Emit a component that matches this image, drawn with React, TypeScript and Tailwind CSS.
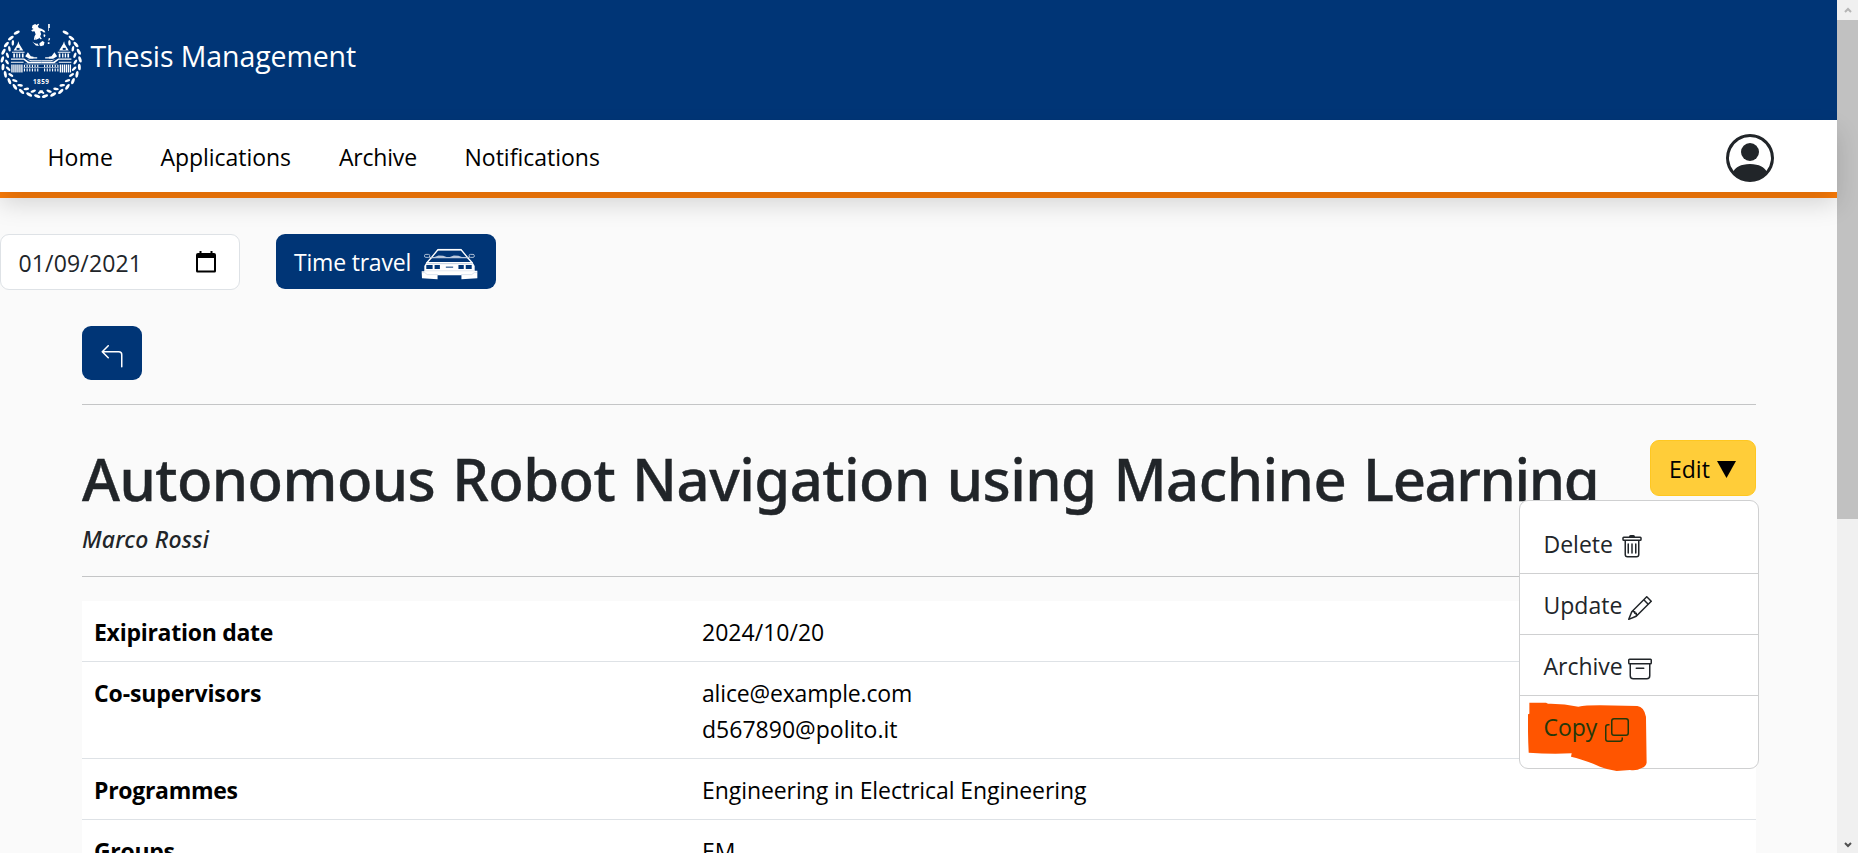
import type { ReactNode } from 'react';
import {
  BsArchive,
  BsArrow90DegLeft,
  BsCopy,
  BsPencil,
  BsPersonCircle,
  BsTrash,
} from 'react-icons/bs';

const LEAF_COUNT = 12;

function Wreath() {
  return (
    <>
      {Array.from({ length: LEAF_COUNT }, (_, i) => {
        const deg = -129 - i * 12.3;
        const t = (deg * Math.PI) / 180;
        const tilt = deg + 270;
        const ox = 124 + 117 * Math.cos(t);
        const oy = 150 + 108 * Math.sin(t);
        const ix = 124 + 103 * Math.cos(t - 0.08);
        const iy = 150 + 95 * Math.sin(t - 0.08);
        return (
          <g key={i}>
            <ellipse cx={ox} cy={oy} rx="10" ry="4.4" transform={`rotate(${tilt + 14} ${ox} ${oy})`} />
            {i > 0 && (
              <ellipse cx={ix} cy={iy} rx="8.5" ry="3.8" transform={`rotate(${tilt - 36} ${ix} ${iy})`} />
            )}
          </g>
        );
      })}
    </>
  );
}

function Crest() {
  const columns = [34, 40, 46, 52, 58, 64];
  const middle = [72, 80, 88, 96, 104, 112];
  return (
    <svg viewBox="0 35 250 230" className="h-[77px] w-[83px] shrink-0" fill="#fff">
      <Wreath />
      <g transform="translate(248 0) scale(-1 1)">
        <Wreath />
      </g>
      {/* statue */}
      <path d="M98 44l8-4 4 3 5-4 3 2-4 6 3 5 8 2 8 5 4 6-5 1-6-5-5 1 3 8-3 7 5 8-4 1-8-9-5 2-3 9-4-1 2-10 4-7-4-8-7 1-3-4 7-4-5-3z" />
      <path d="M104 60l12-2 4 14-3 12-10 4 2-14z" />
      <path d="M97 93q8 8 16 6l4 7-9-1zM119 98l9-7 6 4-2 9-9 3-4-3zM132 70l5 3-2 7-4-3z" />
      <path d="M145 40h5v12h-3v9h-2v-9zM146 84l5-2-1 6-4 3zM144 95h5v5h-5z" />
      {/* palace */}
      {[false, true].map((flip) => (
        <g key={String(flip)} transform={flip ? 'translate(248 0) scale(-1 1)' : undefined}>
          <path d="M55 92l3 8 12 20H41l12-20z" />
          <path d="M50 112h9v6h-9z" fill="#003576" />
          <path d="M36 124h38v3H36zM40 129h5v12h-5zM49 129h4v12h-4zM57 129h4v12h-4zM66 129h5v12h-5z" />
          <path d="M33 144h40l14 10h37v4H84l-13-10H33zM33 154h38v3H33z" />
          <path d="M76 137l8-12 9 12 8 2v6H88l-10-6zM98 140h14v4h-10zM80 146l14 6h30v-3H95z" />
          {columns.map((x) => (
            <rect key={x} x={x} y="162" width="4" height="24" />
          ))}
          {middle.map((x) => (
            <rect key={x} x={x} y="163" width="3.4" height="7" />
          ))}
          {middle.map((x) => (
            <rect key={`b${x}`} x={x} y="174" width="3.4" height="9" />
          ))}
          <path d="M74 160h50v1.5H74zM71 171h53v1.5H71z" />
        </g>
      ))}
      <text
        x="124"
        y="220"
        textAnchor="middle"
        fontFamily="Open Sans, sans-serif"
        fontSize="19"
        fontWeight="700"
        letterSpacing="1.5"
      >
        1859
      </text>
    </svg>
  );
}

function Car() {
  return (
    <svg viewBox="33 70 172 96" className="h-8 w-[57px] shrink-0" fill="none" stroke="#fff">
      <path d="M50 115l14-16 20-24h70l20 24 14 16" strokeWidth="4" />
      <path d="M84 74.5h70" strokeWidth="4" />
      <path d="M64 99h110" stroke="#b9c8dd" strokeWidth="3.5" />
      <path d="M74 97l12-5 14 1 10 4zM120 97l12-5 14 1 10 4z" fill="#b9c8dd" stroke="none" />
      <rect x="43.5" y="89" width="16" height="9" rx="4" stroke="#cdd8e7" strokeWidth="2.5" />
      <rect x="178" y="89" width="16" height="9" rx="4" stroke="#cdd8e7" strokeWidth="2.5" />
      <path d="M58 97l6 4M180 97l-6 4" strokeWidth="2.5" />
      <path d="M50 112h138l7 12v14h8v23l-48 3v-12H83v12l-47-3-1-21h8v-16z" fill="#fff" stroke="none" />
      <path d="M50 117h138" stroke="#7d97bb" strokeWidth="1.5" />
      <path d="M49 121h19v12H49zM74 121h16v12H74zM146 121h16v12h-16zM168 121h18v12h-18z" fill="#003576" stroke="none" />
      <path d="M108 127.5h22" stroke="#003576" strokeWidth="3" />
      <path d="M44 138.5h150" stroke="#c3cfe0" strokeWidth="1.5" />
      <path d="M36 144h8l8 6h32M202 144h-8l-8 6h-32" stroke="#b9c8dd" strokeWidth="1.5" />
    </svg>
  );
}

function Calendar() {
  return (
    <svg viewBox="0 0 20 22" className="h-[22px] w-5" fill="none">
      <path d="M3.5 0h2v2h9V0h2v2H18q2 0 2 2v16q0 1.500-1.500 1.500h-17Q0 21.500 0 20V4q0-2 2-2h1.500z" fill="#000" />
      <path d="M2 7h16v12.5H2z" fill="#fff" />
    </svg>
  );
}

function Marker() {
  return (
    <svg viewBox="84 306 357 208" className="absolute top-[6px] left-[8px] h-[69.3px] w-[119px]">
      <path
        d="M88 308H138L144 311Q190 310 235 320Q255 316 300 316L412 318Q432 320 438 350L440 488Q438 500 425 504Q410 513 390 510L350 513Q325 510 300 500Q250 478 213 470L215 460Q150 463 86 458Q83 400 84 343L88 341Z"
        fill="#ff5500"
      />
    </svg>
  );
}

function Row({ label, labelClass, children }: { label: string; labelClass: string; children: ReactNode }) {
  return (
    <div className="flex border-b border-[#dee2e6] bg-white px-3 pt-[13px] pb-[11px] leading-9 text-black">
      <div className={`w-[608px] shrink-0 font-bold ${labelClass}`}>{label}</div>
      <div>{children}</div>
    </div>
  );
}

function MenuItem({
  label,
  icon,
  className = '',
  children,
}: {
  label: string;
  icon: ReactNode;
  className?: string;
  children?: ReactNode;
}) {
  return (
    <div className={`relative flex h-[61px] items-start pt-[13px] pl-[23.5px] leading-9 last:h-[60px] ${className}`}>
      {children}
      <span className="relative">{label}</span>
      {icon}
    </div>
  );
}

export default function App() {
  return (
    <div className="flex h-[853px] w-full overflow-hidden bg-[#fafafa] font-['Open_Sans','Liberation_Sans',sans-serif] text-[23px] text-[#212529]">
      <div className="min-w-0 flex-1">
        <header className="flex h-[120px] items-center bg-[#003576] text-white">
          <Crest />
          <div className="mt-[-8px] pl-[7.5px] text-[28.5px] leading-9 tracking-[-0.1px]">Thesis Management</div>
        </header>

        <div className="border-b-[6px] border-[#fe7d08]">
          <nav className="relative flex h-[72px] items-center justify-between bg-white pr-[63px] pl-[47.5px] shadow-[0_12px_24px_rgba(0,0,0,0.15)]">
            <div className="flex pt-0.5 leading-9 text-black">
              <a className="w-[113px] tracking-[0.1px]">Home</a>
              <a className="w-[178.5px] tracking-[-0.049px]">Applications</a>
              <a className="w-[125.5px] tracking-[-0.2px]">Archive</a>
              <a>Notifications</a>
            </div>
            <BsPersonCircle className="mt-1 size-12" />
          </nav>
        </div>

        <div className="mt-9 flex gap-9">
          <div className="flex h-14 w-60 items-center justify-between rounded-[9px] border border-[#dee2e6] bg-white pr-[23px] pl-[17.5px]">
            <span className="pt-0.5 leading-9 tracking-[0.16px]">01/09/2021</span>
            <Calendar />
          </div>
          <button className="flex h-[55px] w-[220px] items-center rounded-[9px] bg-[#003576] pl-[18px] text-white">
            <span className="w-[127px] text-left leading-9 tracking-[-0.2px]">Time travel</span>
            <span className="pt-[5px]">
              <Car />
            </span>
          </button>
        </div>

        <main className="mt-9 mr-[81px] ml-[82px]">
          <button className="flex h-[54px] w-[60px] justify-center rounded-[9px] bg-[#003576] pt-[19px] text-white">
            <BsArrow90DegLeft className="size-6" />
          </button>
          <div className="mt-6 h-px bg-[#c4c5c6]" />

          <div className="mt-[35px] flex items-start justify-between">
            <div className="font-['Noto_Sans',sans-serif] font-medium">
              <h1 className="pt-[3px] text-[58px] leading-[72px] tracking-[-0.55px] whitespace-nowrap [-webkit-text-stroke:0.4px_#212529] [word-spacing:2.4px]">
                Autonomous Robot Navigation using Machine <span className="tracking-[-1.4px]">Learning</span>
              </h1>
              <div className="mt-[9px] leading-[30px] tracking-[0.22px] italic">Marco Rossi</div>
            </div>
            <div className="relative shrink-0">
              <button className="flex h-14 w-[106px] items-center rounded-[9px] border border-[#ffc720] bg-[#ffcd39] pl-[18px] text-black">
                <span className="w-[47.5px] pt-0.5 text-left leading-9">Edit</span>
                <svg viewBox="0 0 19 17" className="mt-0.5 h-[17px] w-[19px]">
                  <path d="M0 0h19L9.5 17z" />
                </svg>
              </button>
              <div className="absolute top-[60px] right-[-3px] z-10 w-60 divide-y divide-[#cfd0d1] rounded-[9px] border border-[#cfd0d1] bg-white py-3">
                <MenuItem label="Delete" icon={<BsTrash className="mt-[9px] ml-[7px] size-6" />} />
                <MenuItem label="Update" icon={<BsPencil className="mt-[9px] ml-[5.5px] size-6" />} />
                <MenuItem label="Archive" icon={<BsArchive className="mt-[9px] ml-[5.5px] size-6" />} />
                <MenuItem
                  label="Copy"
                  className="tracking-[-0.05px] text-[#24380a]"
                  icon={<BsCopy className="relative mt-[9px] ml-[8px] size-6" />}
                >
                  <Marker />
                </MenuItem>
              </div>
            </div>
          </div>

          <div className="mt-[22px] h-px bg-[#c4c5c6]" />
          <div className="mt-6">
            <Row label="Exipiration date" labelClass="tracking-[-0.27px]">
              <div className="tracking-[0.02px]">2024/10/20</div>
            </Row>
            <Row label="Co-supervisors" labelClass="tracking-[-0.12px]">
              <div className="tracking-[-0.17px]">alice@example.com</div>
              <div className="tracking-[0.02px]">d567890@polito.it</div>
            </Row>
            <Row label="Programmes" labelClass="tracking-[-0.29px]">
              <div className="tracking-[-0.075px]">Engineering in Electrical Engineering</div>
            </Row>
            <Row label="Groups" labelClass="tracking-[-0.3px]">
              EM
            </Row>
          </div>
        </main>
      </div>

      <div className="flex w-[21px] shrink-0 flex-col bg-[#f0f0f0]">
        <div className="flex h-5 items-center justify-center">
          <svg viewBox="0 0 8 6" className="h-1.5 w-2" fill="none" stroke="#b5b5b5" strokeWidth="2">
            <path d="M1 5l3-3 3 3" />
          </svg>
        </div>
        <div className="h-[499px] bg-[#c1c1c1]" />
        <div className="mt-auto flex h-4 items-center justify-center">
          <svg viewBox="0 0 8 6" className="h-1.5 w-2" fill="none" stroke="#505050" strokeWidth="2">
            <path d="M1 1l3 3 3-3" />
          </svg>
        </div>
      </div>
    </div>
  );
}
